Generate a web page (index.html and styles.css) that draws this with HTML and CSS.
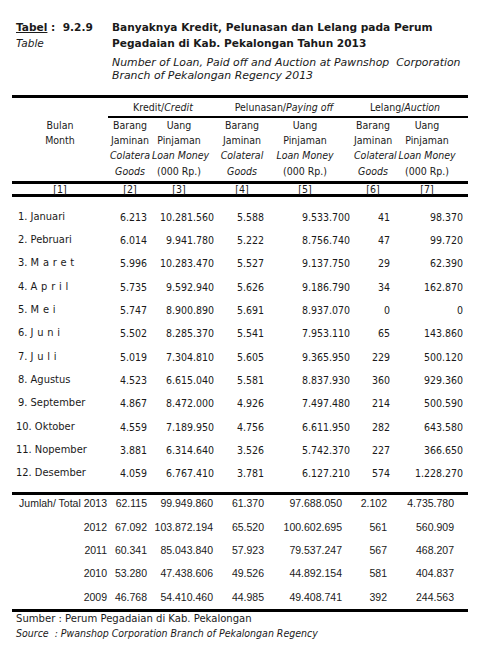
FILE: index.html
```html
<!DOCTYPE html>
<html lang="id">
<head>
<meta charset="utf-8">
<title>Tabel 9.2.9</title>
<link rel="stylesheet" href="styles.css">
</head>
<body>
<div class="page">
  <header class="title">
    <div class="title-label">
      <div class="tl-id"><span class="u">Tabel</span> :&nbsp; 9.2.9</div>
      <div class="tl-en">Table</div>
    </div>
    <div class="title-text">
      <div class="tt-id">Banyaknya Kredit, Pelunasan dan Lelang pada Perum</div>
      <div class="tt-id">Pegadaian di Kab. Pekalongan Tahun 2013</div>
      <div class="tt-en first">Number of Loan, Paid off and Auction at Pawnshop&nbsp; Corporation</div>
      <div class="tt-en">Branch of Pekalongan Regency 2013</div>
    </div>
  </header>

  <section class="table">
    <div class="thead">
      <div class="grp-row">
        <div class="grp-empty"></div>
        <div class="grp g-kredit">Kredit/<i>Credit</i></div>
        <div class="grp g-lunas">Pelunasan/<i>Paying off</i></div>
        <div class="grp g-lelang">Lelang/<i>Auction</i></div>
      </div>
      <div class="sub-row">
        <div class="sh"><div class="ln">Bulan</div><div class="ln">Month</div></div>
        <div class="sh"><div class="ln">Barang</div><div class="ln">Jaminan</div><div class="ln it">Colatera</div><div class="ln it last">Goods</div></div>
        <div class="sh"><div class="ln">Uang</div><div class="ln">Pinjaman</div><div class="ln it">Loan Money</div><div class="ln last">(000 Rp.)</div></div>
        <div class="sh"><div class="ln">Barang</div><div class="ln">Jaminan</div><div class="ln it">Colateral</div><div class="ln it last">Goods</div></div>
        <div class="sh"><div class="ln">Uang</div><div class="ln">Pinjaman</div><div class="ln it">Loan Money</div><div class="ln last">(000 Rp.)</div></div>
        <div class="sh"><div class="ln">Barang</div><div class="ln">Jaminan</div><div class="ln it">Colateral</div><div class="ln it last">Goods</div></div>
        <div class="sh"><div class="ln">Uang</div><div class="ln">Pinjaman</div><div class="ln it">Loan Money</div><div class="ln last">(000 Rp.)</div></div>
      </div>
      <div class="num-row">
        <div>[1]</div><div>[2]</div><div>[3]</div><div>[4]</div><div>[5]</div><div>[6]</div><div>[7]</div>
      </div>
    </div>

    <div class="tbody">
      <div class="row"><div class="m">1. Januari</div><div>6.213</div><div>10.281.560</div><div>5.588</div><div>9.533.700</div><div>41</div><div>98.370</div></div>
      <div class="row"><div class="m">2. Pebruari</div><div>6.014</div><div>9.941.780</div><div>5.222</div><div>8.756.740</div><div>47</div><div>99.720</div></div>
      <div class="row"><div class="m">3. <span class="sp">M a r e t</span></div><div>5.996</div><div>10.283.470</div><div>5.527</div><div>9.137.750</div><div>29</div><div>62.390</div></div>
      <div class="row"><div class="m">4. <span class="sp">A p r i l</span></div><div>5.735</div><div>9.592.940</div><div>5.626</div><div>9.186.790</div><div>34</div><div>162.870</div></div>
      <div class="row"><div class="m">5. <span class="sp">M e i</span></div><div>5.747</div><div>8.900.890</div><div>5.691</div><div>8.937.070</div><div>0</div><div>0</div></div>
      <div class="row"><div class="m">6. <span class="sp">J u n i</span></div><div>5.502</div><div>8.285.370</div><div>5.541</div><div>7.953.110</div><div>65</div><div>143.860</div></div>
      <div class="row"><div class="m">7. <span class="sp">J u l i</span></div><div>5.019</div><div>7.304.810</div><div>5.605</div><div>9.365.950</div><div>229</div><div>500.120</div></div>
      <div class="row"><div class="m">8. Agustus</div><div>4.523</div><div>6.615.040</div><div>5.581</div><div>8.837.930</div><div>360</div><div>929.360</div></div>
      <div class="row"><div class="m">9. September</div><div>4.867</div><div>8.472.000</div><div>4.926</div><div>7.497.480</div><div>214</div><div>500.590</div></div>
      <div class="row"><div class="m m2">10. Oktober</div><div>4.559</div><div>7.189.950</div><div>4.756</div><div>6.611.950</div><div>282</div><div>643.580</div></div>
      <div class="row"><div class="m m2">11. Nopember</div><div>3.881</div><div>6.314.640</div><div>3.526</div><div>5.742.370</div><div>227</div><div>366.650</div></div>
      <div class="row"><div class="m m2">12. Desember</div><div>4.059</div><div>6.767.410</div><div>3.781</div><div>6.127.210</div><div>574</div><div>1.228.270</div></div>
    </div>

    <div class="tfoot">
      <div class="trow"><div class="lbl">Jumlah/ Total 2013</div><div>62.115</div><div>99.949.860</div><div>61.370</div><div>97.688.050</div><div>2.102</div><div>4.735.780</div></div>
      <div class="trow"><div class="lbl">2012</div><div>67.092</div><div>103.872.194</div><div>65.520</div><div>100.602.695</div><div>561</div><div>560.909</div></div>
      <div class="trow"><div class="lbl">2011</div><div>60.341</div><div>85.043.840</div><div>57.923</div><div>79.537.247</div><div>567</div><div>468.207</div></div>
      <div class="trow"><div class="lbl">2010</div><div>53.280</div><div>47.438.606</div><div>49.526</div><div>44.892.154</div><div>581</div><div>404.837</div></div>
      <div class="trow"><div class="lbl">2009</div><div>46.768</div><div>54.410.460</div><div>44.985</div><div>49.408.741</div><div>392</div><div>244.563</div></div>
    </div>
  </section>

  <footer class="source">
    <div class="src-id">Sumber : Perum Pegadaian di Kab. Pekalongan</div>
    <div class="src-en">Source&nbsp; : Pwanshop Corporation Branch of Pekalongan Regency</div>
  </footer>
</div>
</body>
</html>
```

FILE: styles.css
```css
html, body {
  margin: 0;
  padding: 0;
  background: #ffffff;
}

body {
  font-family: "DejaVu Sans Condensed", "DejaVu Sans", sans-serif;
  font-size: 10.5px;
  color: #1a1a1a;
}

.page {
  width: 480px;
  height: 650px;
  padding: 0 12px;
  box-sizing: border-box;
}

/* ---------- title ---------- */
.title {
  display: flex;
  padding: 19px 0 0 4px;
  height: 94.5px;
  box-sizing: border-box;
}

.title-label {
  width: 96px;
  flex: none;
}

.tl-id {
  font-family: "DejaVu Sans", sans-serif;
  font-weight: bold;
  font-size: 10.6px;
  line-height: 16px;
  white-space: nowrap;
}

.tl-id .u {
  text-decoration: underline;
}

.tl-en {
  font-family: "DejaVu Sans", sans-serif;
  font-style: italic;
  font-size: 10.5px;
  line-height: 16px;
}

.title-text {
  flex: 1;
}

.tt-id {
  font-family: "DejaVu Sans", sans-serif;
  font-weight: bold;
  font-size: 10.6px;
  line-height: 16px;
  white-space: nowrap;
}

.tt-en {
  font-family: "DejaVu Sans", sans-serif;
  font-style: italic;
  font-size: 10.9px;
  line-height: 13px;
  white-space: nowrap;
}

.tt-en.first {
  margin-top: 5px;
}

/* ---------- table ---------- */
.table {
  width: 456px;
  border-top: 3px solid #000;
}

.grp-row,
.sub-row,
.num-row,
.row {
  display: grid;
  grid-template-columns: 88px 52px 66px 50px 86px 40px 74px;
}

.grp-row {
  grid-template-columns: 88px 118px 136px 114px;
}

.grp {
  line-height: 18px;
  text-align: center;
  border-bottom: 2px solid #000;
  white-space: nowrap;
}

.g-kredit {
  margin-left: 8px;
}

.g-lunas {
  padding-right: 4px;
}

.g-lelang {
  padding-right: 12px;
}

.sub-row {
  padding-bottom: 2px;
  border-bottom: 3px solid #000;
}

.sh {
  text-align: center;
  white-space: nowrap;
}

.ln {
  line-height: 15px;
}

.ln.last {
  margin-top: 1px;
}

.it {
  font-style: italic;
}

.num-row {
  line-height: 10px;
  text-align: center;
  border-bottom: 3px solid #000;
}

/* header column centre offsets */
.sub-row > :nth-child(1),
.num-row > :nth-child(1) { padding-left: 8px; }
.sub-row > :nth-child(2),
.num-row > :nth-child(2) { padding-left: 8px; }
.sub-row > :nth-child(3),
.num-row > :nth-child(3) { padding-right: 12px; }
.sub-row > :nth-child(4),
.num-row > :nth-child(4) { padding-right: 2px; }
.sub-row > :nth-child(5),
.num-row > :nth-child(5) { padding-right: 12px; }
.sub-row > :nth-child(6),
.num-row > :nth-child(6) { padding-right: 2px; }
.sub-row > :nth-child(7),
.num-row > :nth-child(7) { padding-right: 8px; }

/* ---------- body rows ---------- */
.tbody {
  display: flex;
  flex-direction: column;
  gap: 7.36px;
  padding: 12px 0 11px;
  border-bottom: 3px solid #000;
}

.row {
  line-height: 16px;
  white-space: nowrap;
}

.row > div {
  text-align: right;
}

.row > .m {
  text-align: left;
  padding-left: 6px;
  font-size: 11px;
}

.row > .m.m2 {
  padding-left: 4px;
}

.sp {
  letter-spacing: 0.3px;
}

.row > :nth-child(2) { padding-right: 5px; }
.row > :nth-child(3) { padding-right: 4px; }
.row > :nth-child(4) { padding-right: 4px; }
.row > :nth-child(5) { padding-right: 4px; }
.row > :nth-child(6) { padding-right: 4px; }
.row > :nth-child(7) { padding-right: 5px; }

/* ---------- totals ---------- */
.tfoot {
  display: flex;
  flex-direction: column;
  gap: 7.3px;
  padding: 0 0 4px;
  border-bottom: 3px solid #000;
  font-family: "Liberation Sans", Arial, sans-serif;
  font-size: 10.5px;
}

.trow {
  display: grid;
  grid-template-columns: 96px 44px 66px 50px 78px 45px 77px;
  line-height: 16px;
  white-space: nowrap;
}

.trow > div {
  text-align: right;
}

.trow > .lbl { padding-right: 1px; }
.trow > :nth-child(2) { padding-right: 5px; }
.trow > :nth-child(3) { padding-right: 5px; }
.trow > :nth-child(4) { padding-right: 4px; }
.trow > :nth-child(5) { padding-right: 4px; }
.trow > :nth-child(6) { padding-right: 4px; }
.trow > :nth-child(7) { padding-right: 14px; }

/* ---------- source ---------- */
.source {
  padding-left: 4px;
  font-size: 10.5px;
}

.src-id,
.src-en {
  line-height: 14px;
  white-space: nowrap;
}

.src-id {
  font-size: 11.2px;
}

.src-en {
  font-style: italic;
}
```
